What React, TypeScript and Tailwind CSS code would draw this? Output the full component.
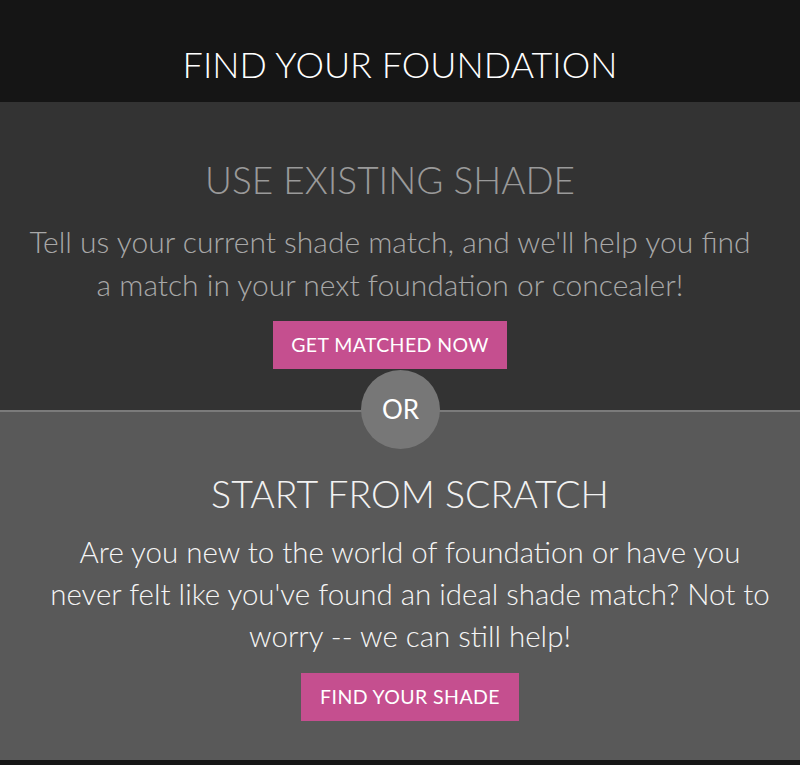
import React from "react";

export default function App() {
  return (
    <div className="w-[800px] h-[765px] overflow-hidden bg-[#151515] flex flex-col" style={{ fontFamily: "Lato, 'Open Sans', sans-serif" }}>
      <header className="h-[102px] bg-[#151515] flex items-center justify-center pt-[26px]">
        <h1 className="text-[36px] font-light text-white leading-none">FIND YOUR FOUNDATION</h1>
      </header>
      <section className="h-[308px] bg-[#333333] flex flex-col items-center pt-[59px] pr-[20px]">
        <h2 className="text-[37px] font-light text-[#9a9a9a] leading-none">USE EXISTING SHADE</h2>
        <p className="mt-[22px] text-[30px] font-light text-[#a8a8a8] leading-[43px] text-center whitespace-nowrap">
          Tell us your current shade match, and we'll help you find<br />a match in your next foundation or concealer!
        </p>
        <button className="mt-[15px] w-[234px] h-[48px] bg-[#c54f8f] text-white text-[19.5px] tracking-[0.4px]">GET MATCHED NOW</button>
      </section>
      <div className="relative h-[2px] bg-[#7b7b7b]">
        <div className="absolute left-[361px] top-[-40px] w-[79px] h-[79px] rounded-full bg-[#777777] flex items-center justify-center text-white text-[26px]">OR</div>
      </div>
      <section className="h-[348px] bg-[#595959] flex flex-col items-center pt-[63px] pl-[20px]">
        <h2 className="text-[37.5px] font-light text-[#f2f2f2] leading-none">START FROM SCRATCH</h2>
        <p className="mt-[18px] text-[29.5px] font-light text-[#f5f5f5] leading-[42px] text-center whitespace-nowrap">
          Are you new to the world of foundation or have you<br />never felt like you've found an ideal shade match? Not to<br />worry -- we can still help!
        </p>
        <button className="mt-[16px] w-[218px] h-[48px] bg-[#c54f8f] text-white text-[19.5px] tracking-[0.4px]">FIND YOUR SHADE</button>
      </section>
      <footer className="flex-1 bg-[#151515]" />
    </div>
  );
}
